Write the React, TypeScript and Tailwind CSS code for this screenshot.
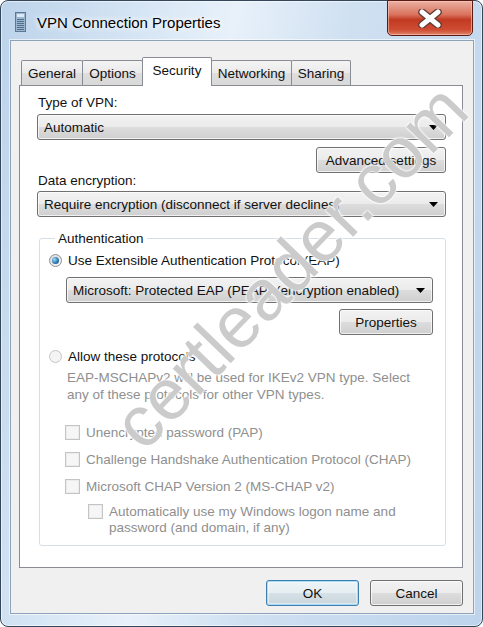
import React from 'react';

const btnBg =
  'bg-[linear-gradient(#f2f2f2,#ebebeb_50%,#dddddd_50%,#cfcfcf)]';

const Arrow = () => (
  <svg width="9" height="5" viewBox="0 0 9 5" className="shrink-0">
    <path d="M0 0h9L4.5 5z" fill="#000" />
  </svg>
);

const Combo: React.FC<{ text: string; className?: string }> = ({ text, className = '' }) => (
  <div
    className={`flex h-[26px] items-center rounded-[3px] border border-[#707070] ${btnBg} pl-[6px] pr-[7px] shadow-[inset_0_0_0_1px_rgba(255,255,255,0.7)] ${className}`}
  >
    <span className="flex-1 truncate">{text}</span>
    <Arrow />
  </div>
);

const Button: React.FC<{ text: string; className?: string; isDefault?: boolean }> = ({
  text,
  className = '',
  isDefault,
}) => (
  <div
    className={`flex h-[26px] items-center justify-center rounded-[3px] border ${
      isDefault
        ? 'border-[#3c7fb1] shadow-[inset_0_0_0_1px_#a9dcf4,inset_0_0_0_2px_rgba(255,255,255,0.4)] bg-[linear-gradient(#eef5f8,#e6eef2_50%,#d5e1e7_50%,#c9d6dc)]'
        : `border-[#707070] ${btnBg} shadow-[inset_0_0_0_1px_rgba(255,255,255,0.7)]`
    } ${className}`}
  >
    {text}
  </div>
);

const Radio: React.FC<{ checked?: boolean; disabled?: boolean }> = ({ checked, disabled }) => (
  <div
    className={`flex h-[13px] w-[13px] shrink-0 items-center justify-center rounded-full border ${
      disabled
        ? 'border-[#c4c4c4] bg-[#f4f4f4]'
        : 'border-[#8e8f8f] bg-[linear-gradient(135deg,#d8d8d8,#f8f8f8)]'
    }`}
  >
    {checked && (
      <div className="h-[7px] w-[7px] rounded-full bg-[radial-gradient(circle_at_35%_35%,#a9d8f6,#2a7ab8_55%,#16496f)]" />
    )}
  </div>
);

const Check = () => (
  <div className="h-[15px] w-[15px] shrink-0 border border-[#c4c4c4] bg-[#f6f6f6] shadow-[inset_0_0_0_1px_#ececec]" />
);

const tabs = [
  { label: 'General', w: 'w-[62px]' },
  { label: 'Options', w: 'w-[61px]' },
  { label: 'Security', w: 'w-[70px]', active: true },
  { label: 'Networking', w: 'w-[81px]' },
  { label: 'Sharing', w: 'w-[60px]' },
];

export default function App() {
  return (
    <div className="relative h-[627px] w-[483px] overflow-hidden bg-white font-['Liberation_Sans',Arial,sans-serif] text-[13.5px] leading-[17px] text-[#111]">
      <div className="relative flex h-full flex-col rounded-[8px] border border-[#34465a] bg-[linear-gradient(100deg,#bcd3ea_0%,#d7e6f5_25%,#e8f1fa_40%,#cfe0f1_60%,#bdd4ec_100%)] pb-[12px] pl-[9px] pr-[8px] shadow-[inset_0_0_0_1px_rgba(255,255,255,0.55)]">
        {/* title bar */}
        <div className="flex h-[39px] shrink-0 items-center pl-[5px]">
          <svg width="11" height="20" viewBox="0 0 11 20" className="mt-[2px]">
            <rect x="0.5" y="0.5" width="10" height="19" fill="#9db6cf" stroke="#5d7896" />
            <rect x="2" y="2" width="7" height="3" fill="#dfe9f3" />
            {[7, 9, 11, 13, 15, 17].map((y) => (
              <rect key={y} x="2" y={y} width="7" height="1" fill="#4f6d8d" />
            ))}
          </svg>
          <span className="ml-[11px] mt-[3px] text-[15px] text-black [text-shadow:0_0_6px_#fff,0_0_6px_#fff]">
            VPN Connection Properties
          </span>
        </div>
        <div className="absolute right-[9px] top-[-1px] flex h-[36px] w-[86px] items-center justify-center rounded-b-[5px] border border-[#5b1a12] bg-[linear-gradient(#eab0a2,#d9735d_40%,#c13a22_55%,#cf4d33_85%,#e0846a)] shadow-[inset_0_0_0_1px_rgba(255,210,200,0.55)]">
          <svg width="26" height="19" viewBox="0 0 26 19">
            <path d="M5 3l16 13M21 3L5 16" stroke="#5c3b36" strokeWidth="7.5" strokeLinecap="round" />
            <path d="M5 3l16 13M21 3L5 16" stroke="#fff" strokeWidth="5" strokeLinecap="round" />
          </svg>
        </div>

        {/* client area */}
        <div className="flex flex-1 flex-col border border-[#8ea3ba] bg-[#f0f0f0] shadow-[0_0_0_1px_rgba(255,255,255,0.6)]">
          <div className="ml-[10px] mt-[16px] flex h-[28px] items-end">
            {tabs.map((t, i) =>
              t.active ? (
                <div
                  key={t.label}
                  className={`relative z-10 -mb-px -ml-px flex h-[29px] ${t.w} items-start justify-center rounded-t-[2px] border border-b-0 border-[#898c95] bg-white pt-[4px]`}
                >
                  {t.label}
                </div>
              ) : (
                <div
                  key={t.label}
                  className={`flex h-[25px] ${t.w} ${i > 0 ? '-ml-px' : ''} items-center justify-center rounded-t-[2px] border border-b-0 border-[#898c95] bg-[linear-gradient(#f4f4f4,#eaeaea_50%,#dedede_50%,#d9d9d9)]`}
                >
                  {t.label}
                </div>
              ),
            )}
          </div>

          {/* tab panel */}
          <div className="ml-[8px] mr-[10px] flex h-[483px] flex-col border border-[#898c95] bg-white pl-[17px] pr-[16px]">
            <div className="ml-px mt-[8px]">Type of VPN:</div>
            <Combo text="Automatic" className="mt-[3px]" />
            <Button text="Advanced settings" className="mt-[7px] w-[130px] self-end" />
            <div className="-mt-px ml-px">Data encryption:</div>
            <Combo text="Require encryption (disconnect if server declines)" className="mt-[2px]" />

            <fieldset className="ml-[2px] mt-[13px] flex flex-col rounded-[3px] border border-[#d5dfe5] pb-[9px] pl-[9px] pr-[12px]">
              <legend className="ml-[6px] px-[3px]">Authentication</legend>
              <div className="mt-[5px] flex items-center gap-[6px]">
                <Radio checked />
                <span>Use Extensible Authentication Protocol (EAP)</span>
              </div>
              <Combo
                text="Microsoft: Protected EAP (PEAP) (encryption enabled)"
                className="ml-[17px] mt-[8px]"
              />
              <Button text="Properties" className="mt-[6px] w-[94px] self-end" />
              <div className="mt-[13px] flex items-center gap-[6px]">
                <Radio disabled />
                <span>Allow these protocols</span>
              </div>
              <div className="ml-[18px] mt-[4px] text-[#8f8f8f]">
                EAP-MSCHAPv2 will be used for IKEv2 VPN type. Select
                <br />
                any of these protocols for other VPN types.
              </div>
              <div className="ml-[16px] mt-[21px] flex items-center gap-[6px] text-[#8f8f8f]">
                <Check />
                <span>Unencrypted password (PAP)</span>
              </div>
              <div className="ml-[16px] mt-[10px] flex items-center gap-[6px] text-[#8f8f8f]">
                <Check />
                <span>Challenge Handshake Authentication Protocol (CHAP)</span>
              </div>
              <div className="ml-[16px] mt-[10px] flex items-center gap-[6px] text-[#8f8f8f]">
                <Check />
                <span>Microsoft CHAP Version 2 (MS-CHAP v2)</span>
              </div>
              <div className="ml-[39px] mt-[9px] flex items-start gap-[6px] leading-[16px] text-[#8f8f8f]">
                <Check />
                <span>
                  Automatically use my Windows logon name and
                  <br />
                  password (and domain, if any)
                </span>
              </div>
            </fieldset>
          </div>

          <div className="mt-[12px] flex justify-end gap-[11px] pr-[10px]">
            <Button text="OK" isDefault className="w-[93px]" />
            <Button text="Cancel" className="w-[93px]" />
          </div>
        </div>
      </div>

      {/* watermark */}
      <div className="pointer-events-none absolute left-[290px] top-[266px] -translate-x-1/2 -translate-y-1/2 -rotate-[46deg] whitespace-nowrap text-[72px] leading-none text-[#cbcbcb] [text-shadow:0_0_2px_#fff,0_0_2px_#fff,0_0_3px_#fff]">
        certleader.com
      </div>
    </div>
  );
}
